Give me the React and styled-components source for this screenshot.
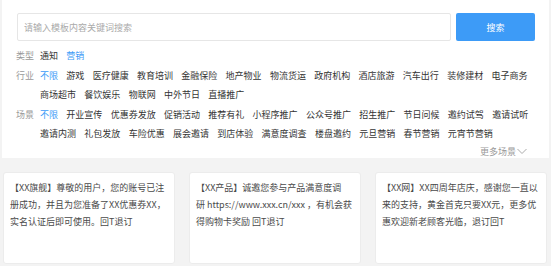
import React from 'react';
import styled, { createGlobalStyle } from 'styled-components';

const GlobalStyle = createGlobalStyle`
  body {
    margin: 0;
    background: #f3f3f3;
    font-family: "Noto Sans CJK SC", "Noto Sans", sans-serif;
  }
`;

const Page = styled.div`
  width: 551px;
  padding: 0 2px;
  box-sizing: border-box;
`;

const Panel = styled.div`
  background: #fff;
  padding: 13px 14px 0 14px;
  height: 158px;
  box-sizing: border-box;
`;

const SearchRow = styled.div`
  display: flex;
  gap: 5px;
  padding-left: 1px;
  margin-bottom: 5px;
`;

const SearchInput = styled.input`
  flex: 1;
  height: 28px;
  box-sizing: border-box;
  border: 1px solid #e6e6e6;
  border-radius: 2px;
  padding: 0 6px;
  font-family: inherit;
  font-size: 9px;
  color: #333;
  outline: none;
  &::placeholder {
    color: #aaa;
  }
`;

const SearchButton = styled.button`
  width: 79px;
  height: 28px;
  border: none;
  border-radius: 2px;
  background: #3d9bf7;
  color: #fff;
  font-family: inherit;
  font-size: 9px;
  cursor: pointer;
`;

const FilterRow = styled.div`
  display: flex;
  align-items: flex-start;
`;

const Label = styled.div`
  flex: none;
  width: 24px;
  font-size: 9px;
  line-height: 19.5px;
  color: #999;
`;

const Items = styled.div`
  flex: 1;
  display: flex;
  flex-wrap: wrap;
  column-gap: 8.3px;
`;

const Item = styled.span`
  font-size: 9px;
  line-height: 19.5px;
  color: ${(p) => (p.active ? '#3d9bf7' : '#333')};
  white-space: nowrap;
  cursor: pointer;
`;

const MoreRow = styled.div`
  display: flex;
  justify-content: flex-end;
  align-items: center;
  padding-right: 8px;
  height: 15px;
  font-size: 9px;
  color: #999;
  gap: 1px;
`;

const Cards = styled.div`
  display: grid;
  grid-template-columns: repeat(3, 172px);
  column-gap: 14px;
  padding: 14px 1px 0;
`;

const Card = styled.div`
  background: #fff;
  border: 1px solid #ececec;
  border-radius: 3px;
  height: 92px;
  box-sizing: border-box;
  padding: 6px 6px;
  font-size: 9px;
  line-height: 17px;
  color: #4a4a4a;
`;

const industries = [
  '不限', '游戏', '医疗健康', '教育培训', '金融保险', '地产物业', '物流货运', '政府机构',
  '酒店旅游', '汽车出行', '装修建材', '电子商务', '商场超市', '餐饮娱乐', '物联网',
  '中外节日', '直播推广',
];

const scenes = [
  '不限', '开业宣传', '优惠券发放', '促销活动', '推荐有礼', '小程序推广', '公众号推广',
  '招生推广', '节日问候', '邀约试驾', '邀请试听', '邀请内测', '礼包发放', '车险优惠',
  '展会邀请', '到店体验', '满意度调查', '楼盘邀约', '元旦营销', '春节营销', '元宵节营销',
];

const templates = [
  '【XX旗舰】尊敬的用户，您的账号已注册成功，并且为您准备了XX优惠券XX，实名认证后即可使用。回T退订',
  '【XX产品】诚邀您参与产品满意度调研\u00a0https://www.xxx.cn/xxx ，有机会获得购物卡奖励 回T退订',
  '【XX网】XX四周年店庆，感谢您一直以来的支持，黄金首克只要XX元，更多优惠欢迎新老顾客光临，退订回T',
];

export default function App() {
  return (
    <Page>
      <GlobalStyle />
      <Panel>
        <SearchRow>
          <SearchInput placeholder="请输入模板内容关键词搜索" />
          <SearchButton>搜索</SearchButton>
        </SearchRow>
        <FilterRow>
          <Label>类型</Label>
          <Items>
            <Item>通知</Item>
            <Item active>营销</Item>
          </Items>
        </FilterRow>
        <FilterRow>
          <Label>行业</Label>
          <Items>
            {industries.map((t, i) => (
              <Item key={t} active={i === 0}>{t}</Item>
            ))}
          </Items>
        </FilterRow>
        <FilterRow>
          <Label>场景</Label>
          <Items>
            {scenes.map((t, i) => (
              <Item key={t} active={i === 0}>{t}</Item>
            ))}
          </Items>
        </FilterRow>
        <MoreRow>
          更多场景
          <svg width="10" height="7" viewBox="0 0 10 7">
            <path d="M0.5 1 L5 5.5 L9.5 1" fill="none" stroke="#aaa" strokeWidth="1" />
          </svg>
        </MoreRow>
      </Panel>
      <Cards>
        {templates.map((t) => (
          <Card key={t}>{t}</Card>
        ))}
      </Cards>
    </Page>
  );
}
